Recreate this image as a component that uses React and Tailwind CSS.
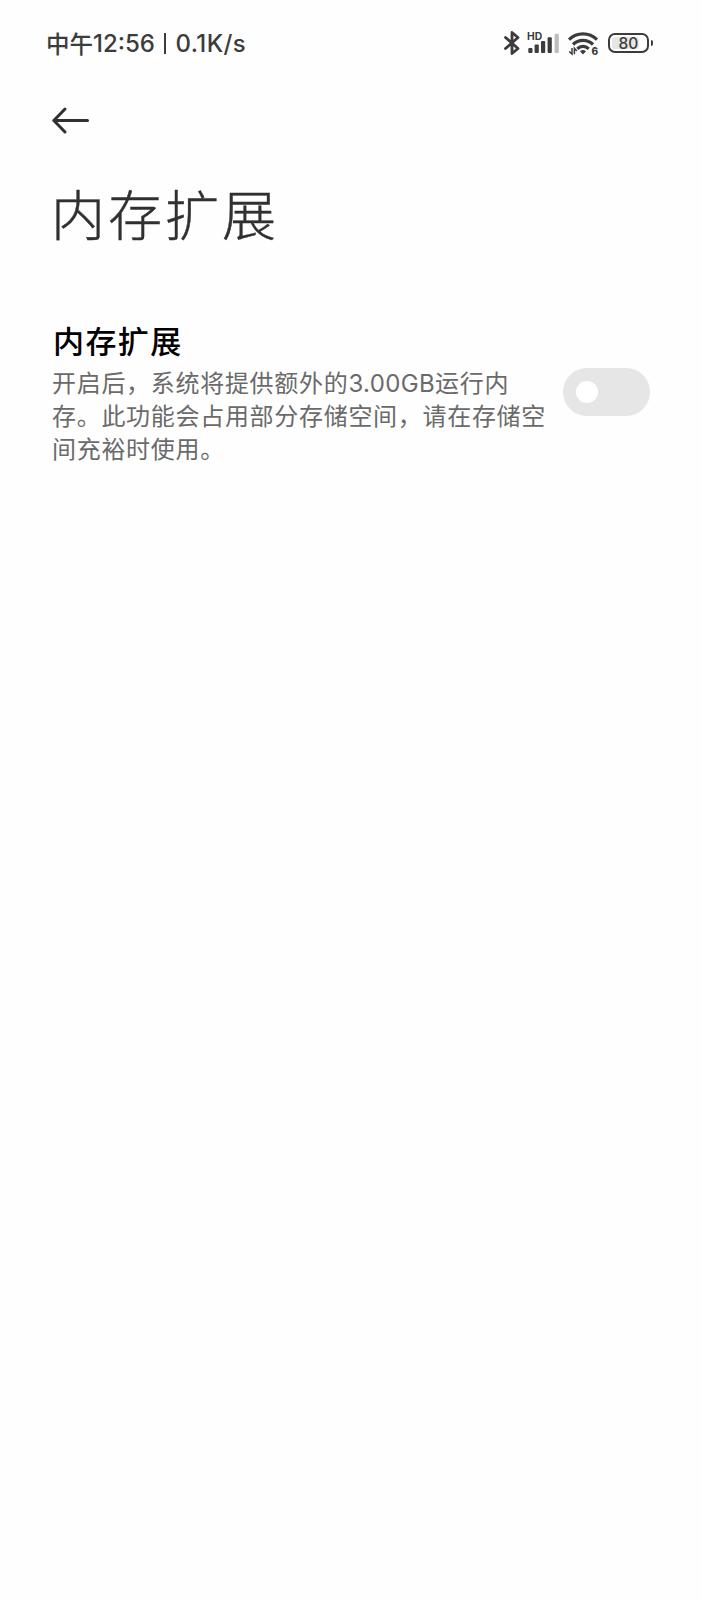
import { useState } from "react";

const BluetoothIcon = () => (
  <svg
    className="w-4 h-[26px]"
    viewBox="0 0 16 26"
    fill="none"
    stroke="currentColor"
    strokeWidth="2.8"
    strokeLinejoin="round"
    strokeLinecap="round"
  >
    <path d="M1.5 7.5 14 18.5 8 23.5V2.5l6 5L1.5 18.5" />
  </svg>
);

const SignalIcon = () => (
  <svg className="w-8 h-[26px]" viewBox="0 0 32 26" fill="currentColor">
    <text x="0" y="9.8" fontSize="10.3" fontWeight="700" fontFamily="Inter">
      HD
    </text>
    <rect x="1.3" y="18" width="4.2" height="5" rx="1" />
    <rect x="7.6" y="14.5" width="4.2" height="8.5" rx="1" />
    <rect x="14" y="11" width="4.2" height="12" rx="1" />
    <rect x="20.6" y="7.3" width="4.2" height="15.7" rx="1" />
    <rect x="27.6" y="3.7" width="4.2" height="19.3" rx="1" fill="#bdbdbd" />
  </svg>
);

const WifiIcon = () => (
  <svg
    className="w-[30px] h-[26px] overflow-visible"
    viewBox="0 0 30 26"
    fill="none"
  >
    <g stroke="currentColor" strokeWidth="3.2">
      <path d="M1 9.6a20 20 0 0 1 28 0" />
      <path d="M5 14.5a14.2 14.2 0 0 1 20 0" />
      <path d="M9.3 18.8a8 8 0 0 1 11.4 0" />
    </g>
    <path d="M12 21.3a4.5 4.5 0 0 1 6 0L15 24.5z" fill="currentColor" />
    <path
      d="M4 18v6L1.2 21.5M6.4 24.3v-6L8.8 21"
      stroke="currentColor"
      strokeWidth="1.5"
    />
    <text
      x="23.4"
      y="24.6"
      fontSize="10"
      fontWeight="800"
      fontFamily="Inter"
      fill="currentColor"
    >
      6
    </text>
  </svg>
);

const Battery = ({ level }) => (
  <div className="flex items-center">
    <div className="w-[41px] h-5 rounded-[7px] border-2 border-[#3c3c3c] p-0.5">
      <div className="h-full w-[27px] rounded-[3px] bg-[#e6e6e6]">
        <div className="w-[33px] h-full pt-px flex items-center justify-center font-['Inter'] text-[15.5px] leading-none font-medium">
          {level}
        </div>
      </div>
    </div>
    <div className="ml-0.5 w-0.5 h-1.5 rounded-r bg-[#3c3c3c]" />
  </div>
);

const StatusBar = () => (
  <header className="flex items-start text-[#3c3c3c] h-[60px] pt-[30px] pl-[46px]">
    <div className="w-[458px] flex items-center h-[27px] whitespace-nowrap font-medium">
      <span className="text-[23.5px] leading-6 pb-0.5">中午</span>
      <span className="font-['Inter'] text-[24px] leading-[27px]">12:56</span>
      <span className="ml-[9px] mr-[9px] w-[2.5px] h-[21px] bg-[#3c3c3c]" />
      <span className="font-['Inter'] text-[24px] leading-[27px] tracking-[0.4px]">
        0.1K/s
      </span>
    </div>
    <BluetoothIcon />
    <div className="ml-[7px]">
      <SignalIcon />
    </div>
    <div className="ml-[9px]">
      <WifiIcon />
    </div>
    <div className="ml-2.5 pt-[3px]">
      <Battery level={80} />
    </div>
  </header>
);

const Toggle = ({ on, onChange }) => (
  <button
    role="switch"
    aria-checked={on}
    aria-label="内存扩展"
    onClick={() => onChange(!on)}
    className={`mt-[51px] flex items-center shrink-0 w-[87px] h-12 rounded-full px-[13px] ${
      on ? "justify-end bg-blue-500" : "bg-[#e6e6e6]"
    }`}
  >
    <span className="w-[22px] h-[22px] rounded-full bg-white" />
  </button>
);

const App = () => {
  const [enabled, setEnabled] = useState(false);

  return (
    <div className="w-[702px] h-[1600px] overflow-hidden bg-[#fefefe] font-['Noto_Sans_CJK_SC',sans-serif]">
      <StatusBar />

      <nav className="pt-[47px] pl-[52px]">
        <svg
          className="w-[38px] h-[27px]"
          viewBox="0 0 38 27"
          fill="none"
          stroke="#303030"
          strokeWidth="3"
          strokeLinecap="round"
          strokeLinejoin="round"
        >
          <path d="M13 2 1.8 13.5 13 25M1.8 13.5H35.5" />
        </svg>
      </nav>

      <h1 className="mt-[39px] pl-[51px] text-[54px] leading-[80px] tracking-[3px] font-light text-[#303030] [-webkit-text-stroke:0.4px_#303030]">
        内存扩展
      </h1>

      <main className="mt-16 pl-[52px] pr-[52px] flex items-start">
        <section className="w-[511px]">
          <h2 className="pl-px text-[31px] leading-[46px] tracking-[1.4px] font-medium text-black">
            内存扩展
          </h2>
          <p className="mt-[2px] text-[24px] leading-[33px] tracking-[0.7px] text-[#6a6a6a]">
            开启后，系统将提供额外的
            <span className="font-['Inter'] leading-none tracking-[0.35px]">
              3.00GB
            </span>
            运行内
            <br />
            存。此功能会占用部分存储空间，请在存储空
            <br />
            间充裕时使用。
          </p>
        </section>
        <Toggle on={enabled} onChange={setEnabled} />
      </main>
    </div>
  );
};

export default App;
